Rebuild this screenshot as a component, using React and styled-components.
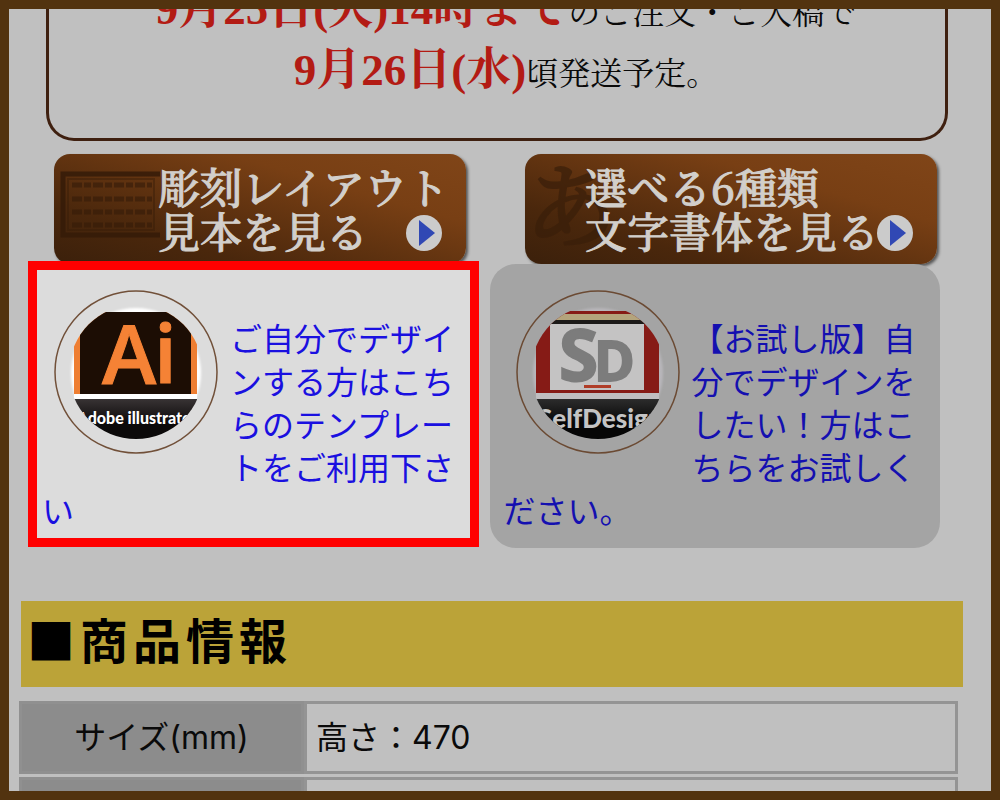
import React from "react";
import styled, { createGlobalStyle, css } from "styled-components";

const sans = `Inter, "Noto Sans CJK JP", sans-serif`;
const serif = `"Liberation Serif", "Noto Serif CJK JP", "Noto Sans CJK JP", serif`;
const labelSerif = `"Noto Serif CJK JP", "Liberation Serif", "Noto Sans CJK JP", serif`;

const GlobalStyle = createGlobalStyle`
  * { box-sizing: border-box; }
  body { margin: 0; background: #52330f; color: #0a0a0a; font-family: ${sans}; }
`;

const Frame = styled.main`
  height: 100vh;
  overflow: hidden;
  border: 9px solid #52330f;
  background: #c0c0c0;
`;

const Notice = styled.section`
  height: 132px;
  margin: 0 43px 0 37px;
  padding: 0 0 33px 18px;
  border: 3px solid #3f2010;
  border-top: 0;
  border-radius: 0 0 28px 28px;
  display: flex;
  flex-direction: column;
  justify-content: flex-end;
`;

const NoticeLine = styled.p`
  margin: 0;
  text-align: center;
  white-space: nowrap;
  font: 32px/61px ${serif};
`;

const Deadline = styled.strong`
  color: #b31b14;
  font-size: 45px;
  line-height: 1;
`;

const ButtonRow = styled.nav`
  display: grid;
  grid-template-columns: 1fr 1fr;
  gap: 59px;
  margin: 13px 54px 0 45px;
`;

const SampleLink = styled.a`
  position: relative;
  overflow: hidden;
  height: 110px;
  padding: 10px 0 0 ${(p) => p.$indent}px;
  border-radius: 16px;
  background: linear-gradient(16deg, #3b200b 0%, #4a270c 25%, #783f14 70%, #804518 100%);
  box-shadow: 2px 2px 3px #555;
  color: #d2cfcb;
  font: 500 42px/44px ${labelSerif};
  -webkit-text-stroke: 1px #d2cfcb;
  text-decoration: none;
  white-space: nowrap;
`;

const LabelLine = styled.span`
  position: relative;
  display: block;
`;

const Arrow = styled.svg`
  position: absolute;
  right: 24px;
  bottom: 13px;
  width: 36px;
  height: 36px;
`;

const PlateIcon = styled.svg`
  position: absolute;
  left: 6px;
  top: 17px;
  width: 100px;
  height: 68px;
`;

const Kana = styled.span`
  position: absolute;
  left: 0;
  top: 0;
  font-size: 92px;
  line-height: 92px;
  color: #3a1f0a;
  -webkit-text-stroke: 2px #3a1f0a;
  opacity: 0.7;
`;

const CardRow = styled.section`
  position: relative;
  display: grid;
  grid-template-columns: 1fr 1fr;
  gap: 11px;
  margin: 0 51px 0 19px;
`;

const Card = styled.article`
  min-height: 284px;
  padding: 26px 18px 15px 14px;
  border-radius: 26px;
  background: #a4a4a4;
  ${(p) =>
    p.$highlighted &&
    css`
      margin: -3px 0 1px;
      padding: 20px 9px 5px 5px;
      border: 9px solid #ff0000;
      border-radius: 0;
      background: #dcdcdc;
    `}
`;

const Badge = styled.svg`
  float: left;
  width: 164px;
  height: 164px;
  margin: 0 12px;
`;

const CardText = styled.p`
  margin: 0;
  padding-top: 28px;
  font-size: 32px;
  line-height: 43px;
`;

const CardLink = styled.a`
  color: ${(p) => (p.$bright ? "#1a10e0" : "#1410b0")};
  text-decoration: none;
`;

const Heading = styled.h2`
  margin: 53px 28px 0 12px;
  padding: 0 6px 12px;
  background: #bba338;
  color: #000;
  font: 700 48px/74px "Noto Sans CJK JP", sans-serif;
  letter-spacing: 5px;
`;

const SpecTable = styled.table`
  width: calc(100% - 43px);
  margin: 11px 0 0 10px;
  table-layout: fixed;
  border-collapse: separate;
  border-spacing: 0 3px;
  font-size: 32px;
`;

const cell = css`
  height: 73px;
  padding: 0 9px 6px;
  border: 3px solid #949494;
  font-weight: 400;
`;

const SpecName = styled.th`
  ${cell}
  width: 285px;
  border-color: #909090;
  background: #8c8c8c;
`;

const SpecValue = styled.td`
  ${cell}
  text-align: left;
`;

function PlayArrow() {
  return (
    <Arrow viewBox="0 0 36 36" aria-hidden="true">
      <circle cx="18" cy="18" r="18" fill="#cbcbcb" />
      <path d="M13 5 L29 18 L13 31 Z" fill="#3048b4" />
    </Arrow>
  );
}

function Plate() {
  return (
    <PlateIcon viewBox="0 0 100 68" aria-hidden="true">
      <g fill="none" stroke="#351b08" opacity="0.85">
        <rect x="3" y="3" width="100" height="61" strokeWidth="5" />
        <rect x="8" y="8" width="86" height="51" strokeWidth="2" opacity="0.5" />
        {[14, 28, 41, 54].map((y) => (
          <path key={y} d={`M12 ${y} H92`} strokeWidth="5" strokeDasharray="10 2 7 2" opacity="0.7" />
        ))}
      </g>
    </PlateIcon>
  );
}

function IllustratorBadge() {
  return (
    <Badge viewBox="0 0 164 164" role="img" aria-label="Adobe illustrator">
      <defs>
        <clipPath id="ai-clip"><circle cx="82" cy="82" r="67" /></clipPath>
        <linearGradient id="ai-base" x1="0" y1="0" x2="0" y2="1">
          <stop offset="0" stopColor="#383334" />
          <stop offset="0.6" stopColor="#0c0a0a" />
        </linearGradient>
        <filter id="ai-soft"><feGaussianBlur stdDeviation="1" /></filter>
      </defs>
      <circle cx="82" cy="82" r="81" fill="none" stroke="#715039" strokeWidth="1.5" />
      <circle cx="82" cy="83" r="65" fill="#fff" filter="url(#ai-soft)" />
      <g clipPath="url(#ai-clip)">
        <rect x="20" y="22" width="123" height="82" fill="#ee7e32" />
        <rect x="26" y="22" width="111" height="82" fill="#1c0d04" />
        <rect x="20" y="104" width="123" height="5" fill="#fff" />
        <rect x="20" y="109" width="123" height="40" fill="url(#ai-base)" />
        <g fill="#f58235" stroke="#f58235" strokeWidth="1" fontFamily="Open Sans" fontWeight="600" fontSize="82">
          <text x="48" y="94">A</text>
          <text x="100" y="94">i</text>
        </g>
        <text x="83" y="134" textAnchor="middle" fill="#fff" fontFamily="Lato" fontWeight="900" fontSize="16">
          Adobe illustrator
        </text>
      </g>
    </Badge>
  );
}

function SelfDesignBadge() {
  return (
    <Badge viewBox="0 0 164 164" role="img" aria-label="SelfDesign">
      <defs>
        <clipPath id="sd-clip"><circle cx="82" cy="82" r="67" /></clipPath>
        <linearGradient id="sd-base" x1="0" y1="0" x2="0" y2="1">
          <stop offset="0" stopColor="#2c2c2c" />
          <stop offset="0.6" stopColor="#060606" />
        </linearGradient>
        <filter id="sd-soft"><feGaussianBlur stdDeviation="1" /></filter>
      </defs>
      <circle cx="82" cy="82" r="81" fill="none" stroke="#6b4a33" strokeWidth="1.5" />
      <circle cx="82" cy="83" r="65" fill="#b8b6ba" filter="url(#sd-soft)" />
      <g clipPath="url(#sd-clip)">
        <rect x="20" y="21" width="123" height="82" fill="#861b16" />
        <rect x="20" y="24" width="123" height="7" fill="#b4a47c" />
        <rect x="20" y="30" width="123" height="4" fill="#1c1a18" />
        <rect x="34" y="34" width="94" height="66" fill="#c4c3c3" />
        <rect x="68" y="95" width="27" height="3" fill="#b03d28" />
        <rect x="20" y="103" width="123" height="6" fill="#c0bec0" />
        <rect x="20" y="109" width="123" height="40" fill="url(#sd-base)" />
        <g fill="#7c7c7c" stroke="#7c7c7c" strokeWidth="2" fontFamily="Open Sans" fontWeight="700">
          <text x="43" y="91" fontSize="71">S</text>
          <text x="78" y="91" fontSize="55">D</text>
        </g>
        <text x="22" y="138" fill="#c4c4c4" fontFamily="Lato" fontWeight="900" fontSize="26">
          SelfDesign
        </text>
      </g>
    </Badge>
  );
}

export default function App() {
  return (
    <>
      <GlobalStyle />
      <Frame>
        <Notice>
          <NoticeLine>
            <Deadline>9月25日(火)14時まで</Deadline>のご注文・ご入稿で
          </NoticeLine>
          <NoticeLine>
            <Deadline>9月26日(水)</Deadline>頃発送予定。
          </NoticeLine>
        </Notice>

        <ButtonRow>
          <SampleLink href="#layout" $indent={104}>
            <Plate />
            <LabelLine>彫刻レイアウト</LabelLine>
            <LabelLine>見本を見る</LabelLine>
            <PlayArrow />
          </SampleLink>
          <SampleLink href="#fonts" $indent={60}>
            <Kana aria-hidden="true">あ</Kana>
            <LabelLine>選べる6種類</LabelLine>
            <LabelLine>文字書体を見る</LabelLine>
            <PlayArrow />
          </SampleLink>
        </ButtonRow>

        <CardRow>
          <Card $highlighted>
            <IllustratorBadge />
            <CardText>
              <CardLink href="#template" $bright>
                ご自分でデザインする方はこちらのテンプレートをご利用下さい
              </CardLink>
            </CardText>
          </Card>
          <Card>
            <SelfDesignBadge />
            <CardText>
              <CardLink href="#trial">
                【お試し版】自分でデザインをしたい！方はこちらをお試しください。
              </CardLink>
            </CardText>
          </Card>
        </CardRow>

        <Heading>■商品情報</Heading>
        <SpecTable>
          <tbody>
            <tr>
              <SpecName scope="row">サイズ(mm)</SpecName>
              <SpecValue>高さ：470</SpecValue>
            </tr>
            <tr>
              <SpecName scope="row" />
              <SpecValue />
            </tr>
          </tbody>
        </SpecTable>
      </Frame>
    </>
  );
}
